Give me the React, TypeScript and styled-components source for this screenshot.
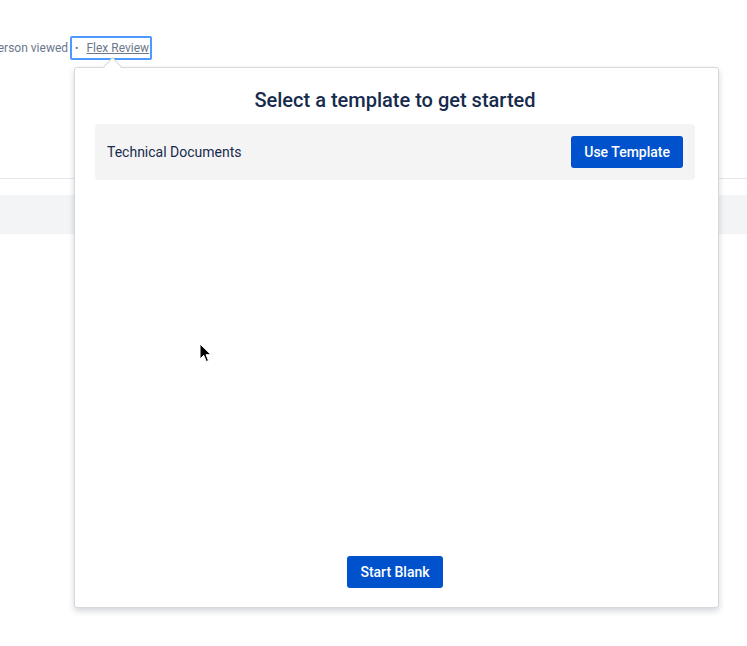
import styled, { createGlobalStyle } from "styled-components";

const Global = createGlobalStyle`
  html, body {
    margin: 0;
    padding: 0;
    background: #fff;
    font-family: Roboto, "Liberation Sans", Arial, sans-serif;
  }
`;

const Page = styled.div`
  position: relative;
  width: 747px;
  height: 646px;
  overflow: hidden;
  background: #fff;
`;

const MetaRow = styled.div`
  display: flex;
  align-items: center;
  height: 24px;
  margin: 36px 0 0 -9px;
  font-size: 12px;
  color: #6b778c;
`;

const FocusBox = styled.span`
  display: flex;
  align-items: center;
  height: 20px;
  margin-left: 2px;
  padding: 0 1px 0 3px;
  border: 2px solid #4c9aff;
  border-radius: 2px;
`;

const Bullet = styled.span`
  margin-right: 8px;
  font-size: 10px;
`;

const Link = styled.a`
  color: #6b778c;
  text-decoration: underline;
`;

const Divider = styled.div`
  margin-top: 118px;
  height: 1px;
  background: #e6e7ea;
`;

const Band = styled.div`
  margin-top: 16px;
  height: 39px;
  background: #f3f4f6;
`;

const Popover = styled.div`
  position: absolute;
  left: 74px;
  top: 67px;
  width: 645px;
  height: 541px;
  box-sizing: border-box;
  display: flex;
  flex-direction: column;
  align-items: center;
  padding: 20px 23px 19px 20px;
  background: #fff;
  border: 1px solid #d5d8dd;
  border-radius: 3px;
  box-shadow: 0 3px 6px rgba(9, 30, 66, 0.18);
`;

const Arrow = styled.div`
  position: absolute;
  left: 31px;
  top: -8px;
  width: 12px;
  height: 12px;
  background: #fff;
  border-left: 1px solid #d5d8dd;
  border-top: 1px solid #d5d8dd;
  transform: rotate(45deg);
`;

const Title = styled.h2`
  margin: 0 0 12px;
  font-size: 20px;
  line-height: 24px;
  font-weight: 500;
  color: #172b4d;
`;

const TemplateRow = styled.div`
  align-self: stretch;
  display: flex;
  align-items: center;
  justify-content: space-between;
  height: 56px;
  padding: 0 12px;
  background: #f4f4f4;
  border-radius: 4px;
  font-size: 14px;
  color: #172b4d;
`;

const Button = styled.button`
  height: 32px;
  padding: 0 13px;
  border: none;
  border-radius: 3px;
  background: #0052cc;
  color: #fff;
  font-family: inherit;
  font-size: 14px;
  font-weight: 500;
  cursor: pointer;
`;

const Spacer = styled.div`
  flex: 1;
`;

const Cursor = styled.svg`
  position: absolute;
  left: 199px;
  top: 343px;
`;

export default function App() {
  return (
    <Page>
      <Global />
      <MetaRow>
        person viewed
        <FocusBox>
          <Bullet>•</Bullet>
          <Link>Flex Review</Link>
        </FocusBox>
      </MetaRow>
      <Divider />
      <Band />
      <Popover>
        <Arrow />
        <Title>Select a template to get started</Title>
        <TemplateRow>
          Technical Documents
          <Button>Use Template</Button>
        </TemplateRow>
        <Spacer />
        <Button>Start Blank</Button>
      </Popover>
      <Cursor width="15" height="21" viewBox="0 0 15 21">
        <path d="M1 1 L1 16 L4.7 12.3 L7.3 18.5 L9.5 17.6 L7 11.7 L12 11.7 Z" fill="#000" stroke="#fff" strokeWidth="1" />
      </Cursor>
    </Page>
  );
}
